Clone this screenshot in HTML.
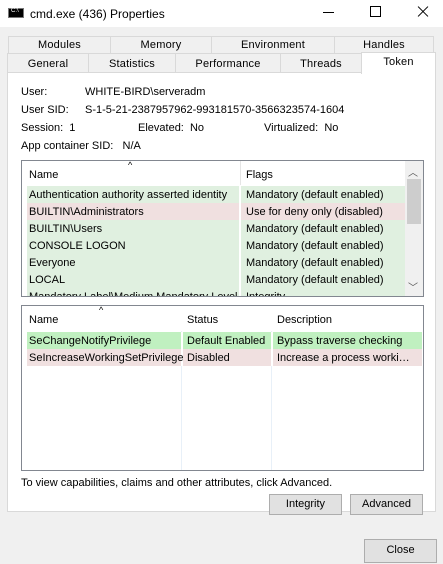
<!DOCTYPE html><html><head><style>
*{margin:0;padding:0;box-sizing:border-box}
body{width:443px;height:564px;background:#f0f0f0;font-family:"Liberation Sans",sans-serif;font-size:11px;color:#000;position:relative;overflow:hidden}
.a{position:absolute;white-space:nowrap}
.tab{position:absolute;border:1px solid #d9d9d9;background:#f0f0f0;text-align:center;line-height:17px;letter-spacing:0.2px}
.btn{position:absolute;border:1px solid #adadad;background:#e1e1e1;text-align:center;line-height:19px}
.row{position:absolute;height:17px;line-height:17px}
</style></head><body>
<div class="a" style="left:0;top:0;width:443px;height:27px;background:#fff"></div>
<div class="a" style="left:8px;top:8px;width:16px;height:10px;background:#000;border:1px solid #777"><span style="position:absolute;left:2px;top:-1px;color:#fff;font-size:6px">C:\</span></div>
<div class="a" style="left:30px;top:7px;font-size:12px">cmd.exe (436) Properties</div>
<div class="a" style="left:323px;top:12px;width:11px;height:1px;background:#000"></div>
<div class="a" style="left:370px;top:6px;width:11px;height:11px;border:1px solid #000"></div>
<div class="a" style="left:416px;top:11px;width:14px;height:1px;background:#000;transform:rotate(45deg)"></div>
<div class="a" style="left:416px;top:11px;width:14px;height:1px;background:#000;transform:rotate(-45deg)"></div>
<div class="tab" style="left:8px;top:36px;width:103px;height:18px">Modules</div>
<div class="tab" style="left:110px;top:36px;width:102px;height:18px">Memory</div>
<div class="tab" style="left:211px;top:36px;width:124px;height:18px">Environment</div>
<div class="tab" style="left:334px;top:36px;width:100px;height:18px">Handles</div>
<div class="tab" style="left:7px;top:53px;width:82px;height:20px;line-height:20px">General</div>
<div class="tab" style="left:88px;top:53px;width:88px;height:20px;line-height:20px">Statistics</div>
<div class="tab" style="left:175px;top:53px;width:106px;height:20px;line-height:20px">Performance</div>
<div class="tab" style="left:280px;top:53px;width:82px;height:20px;line-height:20px">Threads</div>
<div class="a" style="left:7px;top:72px;width:429px;height:440px;background:#fff;border:1px solid #d9d9d9"></div>
<div class="tab" style="left:361px;top:52px;width:75px;height:22px;background:#fff;border-bottom:none;line-height:19px">Token</div>
<div class="a" style="left:21px;top:86px">User:</div><div class="a" style="left:85px;top:86px">WHITE-BIRD\serveradm</div>
<div class="a" style="left:21px;top:104px">User SID:</div><div class="a" style="left:85px;top:104px">S-1-5-21-2387957962-993181570-3566323574-1604</div>
<div class="a" style="left:21px;top:122px">Session:&nbsp; 1</div><div class="a" style="left:138px;top:122px">Elevated:&nbsp; No</div><div class="a" style="left:264px;top:122px">Virtualized:&nbsp; No</div>
<div class="a" style="left:21px;top:140px">App container SID:&nbsp;&nbsp; N/A</div>
<div class="a" style="left:21px;top:160px;width:403px;height:137px;border:1px solid #828790;overflow:hidden;background:#fff">
<div class="a" style="left:106px;top:-1px;font-size:9px">^</div>
<div class="a" style="left:7px;top:8px">Name</div><div class="a" style="left:218px;top:0;width:1px;height:24px;background:#e5e5e5"></div><div class="a" style="left:224px;top:8px">Flags</div>
<div class="row" style="left:5px;top:25px;width:397px;background:#e0f0e0"></div>
<div class="row" style="left:5px;top:42px;width:397px;background:#f0e0e0"></div>
<div class="row" style="left:5px;top:59px;width:397px;height:85px;background:#e0f0e0"></div>
<div class="a" style="left:217px;top:25px;width:2px;height:120px;background:#fff"></div>
<div class="a" style="left:7px;top:26px;line-height:17px;width:208px;overflow:hidden">Authentication authority asserted identity<br>BUILTIN\Administrators<br>BUILTIN\Users<br>CONSOLE LOGON<br>Everyone<br>LOCAL<br>Mandatory Label\Medium Mandatory Level</div>
<div class="a" style="left:224px;top:26px;line-height:17px">Mandatory (default enabled)<br>Use for deny only (disabled)<br>Mandatory (default enabled)<br>Mandatory (default enabled)<br>Mandatory (default enabled)<br>Mandatory (default enabled)<br>Integrity</div>
<div class="a" style="left:383px;top:0;width:18px;height:135px;background:#f0f0f0"></div>
<div class="a" style="left:385px;top:18px;width:14px;height:45px;background:#cdcdcd"></div>
<div class="a" style="left:386px;top:3px;font-size:10px;color:#555">︿</div>
<div class="a" style="left:386px;top:118px;font-size:10px;color:#555">﹀</div>
</div>
<div class="a" style="left:21px;top:305px;width:403px;height:166px;border:1px solid #828790;background:#fff;overflow:hidden">
<div class="a" style="left:77px;top:-1px;font-size:9px">^</div>
<div class="a" style="left:7px;top:8px">Name</div><div class="a" style="left:165px;top:8px">Status</div><div class="a" style="left:255px;top:8px">Description</div>
<div class="a" style="left:159px;top:25px;width:1px;height:140px;background:#e8f0f8"></div>
<div class="a" style="left:249px;top:25px;width:1px;height:140px;background:#e8f0f8"></div>
<div class="row" style="left:5px;top:26px;width:395px;background:#c0f0c0"></div>
<div class="row" style="left:5px;top:43px;width:395px;background:#f0e0e0"></div>
<div class="a" style="left:159px;top:26px;width:2px;height:34px;background:#fff"></div>
<div class="a" style="left:249px;top:26px;width:2px;height:34px;background:#fff"></div>
<div class="a" style="left:7px;top:27px;line-height:17px">SeChangeNotifyPrivilege<br>SeIncreaseWorkingSetPrivilege</div>
<div class="a" style="left:165px;top:27px;line-height:17px">Default Enabled<br>Disabled</div>
<div class="a" style="left:255px;top:27px;line-height:17px">Bypass traverse checking<br>Increase a process worki…</div>
</div>
<div class="a" style="left:21px;top:477px">To view capabilities, claims and other attributes, click Advanced.</div>
<div class="btn" style="left:269px;top:494px;width:73px;height:21px">Integrity</div>
<div class="btn" style="left:350px;top:494px;width:73px;height:21px">Advanced</div>
<div class="btn" style="left:364px;top:539px;width:73px;height:24px;line-height:21px">Close</div>
</body></html>
